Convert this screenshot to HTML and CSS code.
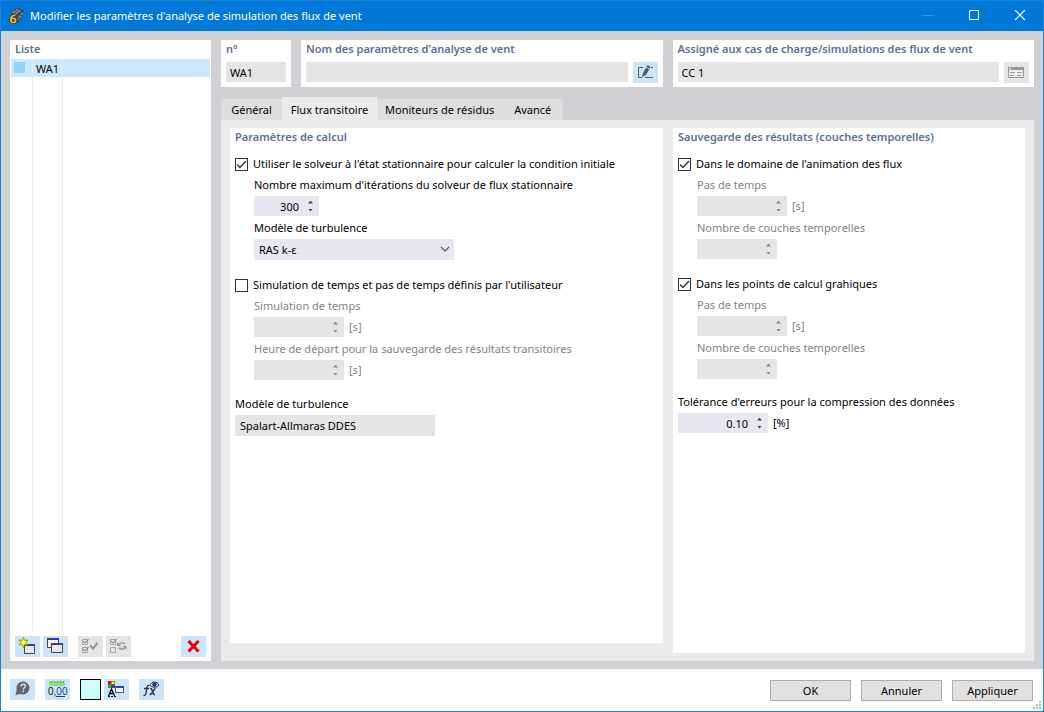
FILE: index.html
```html
<!DOCTYPE html>
<html lang="fr">
<head>
<meta charset="utf-8">
<title>Modifier les paramètres d'analyse de simulation des flux de vent</title>
<link rel="stylesheet" href="styles.css">
</head>
<body>
<div class="window">
  <header class="titlebar">
    <svg class="app-icon" viewBox="0 0 16 16" aria-hidden="true">
      <path d="M2 4 8 0l7 3v3l-6 9-3-1z" fill="#2e3b4a"/>
      <path d="M2.500 4 8 1l4 2-5 4z" fill="#9aa5b0"/>
      <path d="M13 4l2 1-5 8-2-3z" fill="#75818e"/>
      <path d="M4 3l4 3M6 2l4 3M4 6l6-4M11 7l3 1M9 10l3 1" stroke="#2b3642" stroke-width=".8"/>
      <path d="M6.500 7.500H4L2 9.500v4l1 1h2.500l1-1v-2l-1-1H2.500" fill="none" stroke="#3d3217" stroke-width="3"/>
      <path d="M6.500 7.500H4L2 9.500v4l1 1h2.500l1-1v-2l-1-1H2.500" fill="none" stroke="#f8c13a" stroke-width="1.600"/>
    </svg>
    <h1 class="title">Modifier les paramètres d'analyse de simulation des flux de vent</h1>
    <div class="window-controls">
      <button class="window-btn" type="button" aria-label="Réduire" disabled><svg viewBox="0 0 12 12"><path d="M1 5.500h10" stroke="#3a94e0"/></svg></button>
      <button class="window-btn" type="button" aria-label="Agrandir"><svg viewBox="0 0 12 12"><path d="M1.500 .5h9v9h-9z" fill="none" stroke="#fff"/></svg></button>
      <button class="window-btn" type="button" aria-label="Fermer"><svg viewBox="0 0 12 12"><path d="M1 0l10 10M11 0 1 10" stroke="#fff" stroke-width="1.200"/></svg></button>
    </div>
  </header>

  <main class="workspace">
    <section class="card list-card">
      <h2 class="heading">Liste</h2>
      <div class="list" role="listbox" aria-label="Liste">
        <div class="list-row" role="option" aria-selected="true">
          <span class="list-cell swatch-cell"><span class="swatch"></span></span>
          <span class="list-cell name-cell">WA1</span>
        </div>
      </div>
      <div class="toolbar">
        <button class="tool" type="button" aria-label="Nouveau">
          <svg viewBox="0 0 25 21"><path d="M9.500 8.500h10v9h-10z" fill="#e8e8e8" stroke="#444"/><path d="M9 8h11v2H9z" fill="#444"/><path d="M14 8h5v2h-5z" fill="#2638e0"/><path d="M8.500 1.500l1.200 3 3.300-.5-2 2.500 2 2.500-3.300-.5-1.200 3-1.200-3L4 9l2-2.500L4 4l3.300.5z" fill="#ffff2a" stroke="#77771a" stroke-width=".7"/></svg>
        </button>
        <button class="tool" type="button" aria-label="Copier">
          <svg viewBox="0 0 25 21"><path d="M4.500 2.500h11v9h-11z" fill="#f5f5f5" stroke="#444"/><path d="M4 2h12v2H4z" fill="#444"/><path d="M10 2h5v2h-5z" fill="#2638e0"/><path d="M8.500 7.500h11v9h-11z" fill="#e8e8e8" stroke="#444"/><path d="M8 7h12v2H8z" fill="#444"/><path d="M14 7h5v2h-5z" fill="#2638e0"/></svg>
        </button>
        <button class="tool tool-off tool-group" type="button" aria-label="Tout sélectionner" disabled>
          <svg viewBox="0 0 25 21" fill="none" stroke="#a5a5a5"><path d="M4.500 3.500h5v5h-5zM4.500 11.500h5v5h-5z"/><path d="M5 5l2 2 3.500-4M5 13l2 2 3.500-4" stroke="#777"/><path d="M12 9.500l3 3 4.500-5.500" stroke="#999" stroke-width="2.400"/></svg>
        </button>
        <button class="tool tool-off" type="button" aria-label="Inverser la sélection" disabled>
          <svg viewBox="0 0 25 21" fill="none" stroke="#a5a5a5"><path d="M4.500 3.500h5v5h-5zM4.500 11.500h5v5h-5z"/><path d="M5 5l2 2 3.500-4" stroke="#777"/><path d="M13 8.500c1.500-2 4-2 6-.5M19 11.500c-1.500 2-4 2-6 .5" stroke="#999" stroke-width="1.600"/><path d="M11 6v4h4zM20.500 14v-4h-4z" fill="#999" stroke="none"/></svg>
        </button>
        <button class="tool tool-end" type="button" aria-label="Supprimer">
          <svg viewBox="0 0 25 21"><path d="M7.500 5l10 10.500M17.500 5l-10 10.500" stroke="#f00000" stroke-width="3"/></svg>
        </button>
      </div>
    </section>

    <div class="details">
      <div class="summary">
        <section class="card summary-card number-card">
          <label class="heading" for="numero">n°</label>
          <input class="field" id="numero" value="WA1" readonly>
        </section>
        <section class="card summary-card">
          <label class="heading" for="nom">Nom des paramètres d'analyse de vent</label>
          <div class="field-line">
            <input class="field" id="nom" value="" readonly>
            <button class="tool" type="button" aria-label="Modifier le nom">
              <svg viewBox="0 0 25 21"><path d="M10 5.500H5.500v10H9M12 15.500h8M18 5.500h2" fill="none" stroke="#555"/><path d="M9 15l1-4 4.500-8 3 2-4.500 8z" fill="#555"/><path d="M13 5l3 2" stroke="#cce4f7"/></svg>
            </button>
          </div>
        </section>
        <section class="card summary-card">
          <label class="heading" for="assigne">Assigné aux cas de charge/simulations des flux de vent</label>
          <div class="field-line">
            <input class="field" id="assigne" value="CC 1" readonly>
            <button class="tool tool-off" type="button" aria-label="Sélectionner" disabled>
              <svg viewBox="0 0 25 21"><path d="M4.500 5.500h15v10h-15z" fill="#eee" stroke="#999"/><path d="M4 5h16v3H4z" fill="#999"/><path d="M5 6.500h2" stroke="#eee"/><path d="M6 10.500h5M13 10.500h5M6 13.500h4M13 13.500h4" stroke="#999"/></svg>
            </button>
          </div>
        </section>
      </div>

      <div class="tabs" role="tablist">
        <button class="tab" type="button" role="tab">Général</button>
        <button class="tab tab-active" type="button" role="tab" aria-selected="true">Flux transitoire</button>
        <button class="tab tab-wide" type="button" role="tab">Moniteurs de résidus</button>
        <button class="tab" type="button" role="tab">Avancé</button>
      </div>

      <div class="tab-panel" role="tabpanel">
        <section class="pane pane-calc">
          <h2 class="heading">Paramètres de calcul</h2>
          <div class="group">
            <label class="check"><input type="checkbox" checked>Utiliser le solveur à l'état stationnaire pour calculer la condition initiale</label>
            <div class="sub">
              <label class="label" for="iterations">Nombre maximum d'itérations du solveur de flux stationnaire</label>
              <div class="spin spin-small">
                <input class="spin-input" id="iterations" type="number" value="300">
                <div class="spin-arrows"><button class="arrow up" type="button" aria-label="Augmenter"></button><button class="arrow down" type="button" aria-label="Diminuer"></button></div>
              </div>
              <label class="label" for="turbulence">Modèle de turbulence</label>
              <div class="select-box">
                <select class="select" id="turbulence"><option>RAS k-ε</option></select>
                <svg class="chevron" viewBox="0 0 10 6" aria-hidden="true"><path d="M1 1l4 4 4-4" fill="none" stroke="#555" stroke-width="1.100"/></svg>
              </div>
            </div>
          </div>
          <div class="group">
            <label class="check"><input type="checkbox">Simulation de temps et pas de temps définis par l'utilisateur</label>
            <div class="sub sub-off">
              <label class="label" for="temps">Simulation de temps</label>
              <div class="field-line">
                <div class="spin">
                  <input class="spin-input" id="temps" type="number" disabled>
                  <div class="spin-arrows"><button class="arrow up" type="button" aria-label="Augmenter" disabled></button><button class="arrow down" type="button" aria-label="Diminuer" disabled></button></div>
                </div>
                <span class="unit">[s]</span>
              </div>
              <label class="label" for="depart">Heure de départ pour la sauvegarde des résultats transitoires</label>
              <div class="field-line">
                <div class="spin">
                  <input class="spin-input" id="depart" type="number" disabled>
                  <div class="spin-arrows"><button class="arrow up" type="button" aria-label="Augmenter" disabled></button><button class="arrow down" type="button" aria-label="Diminuer" disabled></button></div>
                </div>
                <span class="unit">[s]</span>
              </div>
            </div>
          </div>
          <div class="group group-last">
            <label class="label" for="modele">Modèle de turbulence</label>
            <input class="field model-field" id="modele" value="Spalart-Allmaras DDES" readonly>
          </div>
        </section>

        <section class="pane pane-save">
          <h2 class="heading">Sauvegarde des résultats (couches temporelles)</h2>
          <div class="group">
            <label class="check"><input type="checkbox" checked>Dans le domaine de l'animation des flux</label>
            <div class="sub sub-off">
              <label class="label" for="pas1">Pas de temps</label>
              <div class="field-line">
                <div class="spin">
                  <input class="spin-input" id="pas1" type="number" disabled>
                  <div class="spin-arrows"><button class="arrow up" type="button" aria-label="Augmenter" disabled></button><button class="arrow down" type="button" aria-label="Diminuer" disabled></button></div>
                </div>
                <span class="unit">[s]</span>
              </div>
              <label class="label" for="couches1">Nombre de couches temporelles</label>
              <div class="spin spin-medium">
                <input class="spin-input" id="couches1" type="number" disabled>
                <div class="spin-arrows"><button class="arrow up" type="button" aria-label="Augmenter" disabled></button><button class="arrow down" type="button" aria-label="Diminuer" disabled></button></div>
              </div>
            </div>
          </div>
          <div class="group">
            <label class="check"><input type="checkbox" checked>Dans les points de calcul grahiques</label>
            <div class="sub sub-off">
              <label class="label" for="pas2">Pas de temps</label>
              <div class="field-line">
                <div class="spin">
                  <input class="spin-input" id="pas2" type="number" disabled>
                  <div class="spin-arrows"><button class="arrow up" type="button" aria-label="Augmenter" disabled></button><button class="arrow down" type="button" aria-label="Diminuer" disabled></button></div>
                </div>
                <span class="unit">[s]</span>
              </div>
              <label class="label" for="couches2">Nombre de couches temporelles</label>
              <div class="spin spin-medium">
                <input class="spin-input" id="couches2" type="number" disabled>
                <div class="spin-arrows"><button class="arrow up" type="button" aria-label="Augmenter" disabled></button><button class="arrow down" type="button" aria-label="Diminuer" disabled></button></div>
              </div>
            </div>
          </div>
          <div class="group group-last">
            <label class="label" for="tolerance">Tolérance d'erreurs pour la compression des données</label>
            <div class="field-line">
              <div class="spin">
                <input class="spin-input" id="tolerance" type="number" step="0.01" value="0.10">
                <div class="spin-arrows"><button class="arrow up" type="button" aria-label="Augmenter"></button><button class="arrow down" type="button" aria-label="Diminuer"></button></div>
              </div>
              <span class="unit">[%]</span>
            </div>
          </div>
        </section>
      </div>
    </div>
  </main>

  <footer class="footer">
    <div class="footer-tools">
      <button class="tool" type="button" aria-label="Aide">
        <svg viewBox="0 0 25 21"><circle cx="13" cy="9" r="6.500" fill="#636363"/><path d="M7 9l-1.500 7 7-1.500z" fill="#636363"/><path d="M11 7.500c0-3 4.500-3 4.500-.5 0 1.500-2.200 1.500-2.200 3.500" fill="none" stroke="#cce4f7" stroke-width="1.500"/><path d="M12.500 11.500h1.600v1.600h-1.600z" fill="#cce4f7"/></svg>
      </button>
      <button class="tool" type="button" aria-label="Unités et décimales">
        <svg viewBox="0 0 25 21"><path d="M4 2h16v5H4z" fill="#92dc88"/><path d="M6.500 2v2M9.500 2v2M12.500 2v2M15.500 2v2M18.500 2v2" stroke="#69a962"/><text x="3" y="16" class="icon-digits">0,<tspan fill="#1c3f94">00</tspan></text><path d="M11 17.500h9" stroke="#1c3f94"/></svg>
      </button>
      <button class="color-box" type="button" aria-label="Couleur"></button>
      <button class="tool tool-near" type="button" aria-label="Affichage">
        <svg viewBox="0 0 25 21"><path d="M4 2h7v7H4z" fill="#555"/><path d="M4.500 2.500h3v3h-3z" fill="#f00"/><path d="M7.500 2.500h3v3h-3z" fill="#ffe600"/><path d="M4.500 5.500h3v3h-3z" fill="#00d000"/><path d="M7.500 5.500h3v3h-3z" fill="#3030ff"/><path d="M4.500 17l3-7 3 7M6 14.500h3.500" fill="none" stroke="#111" stroke-width="1.300"/><path d="M4 17.500h9" stroke="#111" stroke-dasharray="2 1"/><path d="M11.500 7.500h8v6h-8z" fill="#f3f3f3" stroke="#555"/><path d="M11 7h9v2h-9z" fill="#555"/><path d="M14 7h5v2h-5z" fill="#2638e0"/></svg>
      </button>
      <button class="tool" type="button" aria-label="Formule">
        <svg viewBox="0 0 25 21" fill="none" stroke="#333"><path d="M10.500 6.500c-2.500-1-2.500 2-3 4.500S7 17 4.500 16.500M5 9.500h5" stroke-width="1.300"/><path d="M11 9.500c3-1 2 7 5 6M16.500 9.500c-2 0-3 7-6 6" stroke-width="1.500"/><path d="M11 6c2-4 7-4 9 0-2 3-7 3-9 0z" fill="#e4ebf5" stroke="#26336b"/><circle cx="15.500" cy="5.500" r="2.200" fill="#26336b" stroke="none"/></svg>
      </button>
    </div>
    <div class="footer-actions">
      <button class="action" type="button">OK</button>
      <button class="action" type="button">Annuler</button>
      <button class="action" type="button">Appliquer</button>
    </div>
    <svg class="grip" viewBox="0 0 8 8" aria-hidden="true"><path d="M6 0h2v2H6zM3 3h2v2H3zM6 3h2v2H6zM0 6h2v2H0zM3 6h2v2H3zM6 6h2v2H6z" fill="#bfbfbf"/></svg>
  </footer>
</div>
</body>
</html>
```
FILE: styles.css
```css
* {
  box-sizing: border-box;
}

body {
  margin: 0;
  color: #000;
  font: 11px/16px "Noto Sans", "Open Sans", sans-serif;
}

button,
input,
select {
  margin: 0;
  border: 0;
  border-radius: 0;
  padding: 0;
  color: inherit;
  font: inherit;
}

.window {
  display: flex;
  flex-direction: column;
  min-height: 100vh;
  border: 1px solid #1883d7;
  background: #fff;
}

/* Title bar */

.titlebar {
  display: flex;
  align-items: center;
  height: 30px;
  padding-left: 8px;
  background: #0078d7;
  color: #fff;
}

.app-icon {
  width: 16px;
  height: 16px;
  margin-right: 5px;
}

.title {
  flex: 1;
  margin: 0;
  font-size: 11px;
  font-weight: 400;
}

.window-controls {
  display: flex;
  height: 100%;
}

.window-btn {
  display: flex;
  align-items: center;
  justify-content: center;
  width: 46px;
  background: none;
}

.window-btn svg {
  width: 12px;
  height: 12px;
}

/* Work area */

.workspace {
  display: flex;
  flex: 1;
  gap: 10px;
  padding: 9px 9px 8px;
  background: #d1d0d5;
}

.card {
  background: #fff;
}

.heading {
  display: block;
  margin: 0;
  padding-left: 5px;
  color: #5a6e96;
  font-size: 11px;
  font-weight: 600;
  line-height: 18px;
}

.list-card {
  display: flex;
  flex-direction: column;
  width: 201px;
}

.list {
  flex: 1;
  margin: 1px 1px 0;
  background:
    linear-gradient(#ebebeb, #ebebeb) 21px 0 / 1px 100% no-repeat,
    linear-gradient(#ebebeb, #ebebeb) 51px 0 / 1px 100% no-repeat;
}

.list-row {
  display: flex;
  height: 18px;
  background: #cce8ff;
}

.list-cell {
  border-right: 1px solid #ebebeb;
  line-height: 20px;
}

.swatch-cell {
  width: 22px;
  padding: 3px;
}

.swatch {
  display: block;
  width: 11px;
  height: 11px;
  background: #8fd6f5;
}

.name-cell {
  width: 30px;
  padding-left: 3px;
}

.toolbar {
  display: flex;
  gap: 3px;
  padding: 5px 5px 4px;
}

.tool {
  flex: none;
  width: 25px;
  height: 21px;
  background: #cce4f7;
}

.tool svg {
  display: block;
  width: 25px;
  height: 21px;
}

.tool-off {
  background: #e5e5e5;
}

.tool-group {
  margin-left: 7px;
}

.tool-end {
  margin-left: auto;
}

.details {
  display: flex;
  flex: 1;
  flex-direction: column;
}

.summary {
  display: flex;
  gap: 10px;
}

.summary-card {
  flex: 1;
  padding-bottom: 4px;
}

.number-card {
  flex: none;
  width: 70px;
}

.summary-card .field-line,
.number-card .field {
  margin: 4px 5px 0;
}

.number-card .field {
  width: 60px;
}

.summary-card .field-line {
  gap: 5px;
}

.field-line {
  display: flex;
}

.field {
  display: block;
  width: 100%;
  height: 20px;
  padding: 0 4px;
  background: #e5e5e5;
}

/* Tabs */

.tabs {
  display: flex;
  align-items: flex-end;
  margin-top: 10px;
}

.tab {
  min-width: 61px;
  height: 21px;
  padding: 1px 8px 0;
  background: #dedede;
  white-space: nowrap;
}

.tab-active {
  height: 23px;
  min-width: 95px;
  padding-top: 2px;
  background: #ebebeb;
}

.tab-wide {
  min-width: 124px;
}

.tab-panel {
  display: flex;
  flex: 1;
  gap: 10px;
  padding: 8px 9px;
  background: #ebebeb;
}

.pane {
  background: #fff;
}

.pane-calc {
  flex: 433;
  margin-bottom: 10px;
}

.pane-save {
  flex: 352;
}

.pane > .heading {
  margin-bottom: 8px;
}

.group {
  padding: 0 5px;
}

.group + .group {
  margin-top: 15px;
}

.group + .group-last {
  margin-top: 12px;
}

.sub {
  padding-left: 19px;
}

.sub-off {
  color: #838383;
}

.check {
  display: flex;
  align-items: center;
  gap: 5px;
  height: 20px;
}

.check input {
  flex: none;
  appearance: none;
  width: 13px;
  height: 13px;
  border: 1px solid #333;
  background: #fff;
}

.check input:checked {
  background: url("data:image/svg+xml,%3Csvg xmlns='http://www.w3.org/2000/svg' viewBox='0 0 11 11'%3E%3Cpath d='M1 5.500l3 3 6-6.500' fill='none' stroke='%23333' stroke-width='1.300'/%3E%3C/svg%3E");
}

.label {
  display: block;
  line-height: 22px;
}

.spin {
  display: flex;
  width: 90px;
  height: 20px;
  margin-bottom: 1px;
  background: #e7e7f2;
}

.spin-small {
  width: 65px;
}

.spin-medium {
  width: 80px;
}

.spin-input {
  flex: 1;
  min-width: 0;
  appearance: textfield;
  padding-top: 1px;
  background: transparent;
  text-align: right;
}

.spin-input::-webkit-inner-spin-button {
  appearance: none;
}

.spin-arrows {
  display: flex;
  flex-direction: column;
  justify-content: center;
  gap: 5px;
  width: 20px;
  padding-left: 9px;
}

.arrow {
  width: 5px;
  height: 3px;
  background: #444;
}

.up {
  clip-path: polygon(50% 0, 100% 100%, 0 100%);
}

.down {
  clip-path: polygon(0 0, 100% 0, 50% 100%);
}

.sub-off .spin {
  background: #e5e5e5;
}

.sub-off .arrow {
  background: #8c8c8c;
}

.unit {
  padding-left: 5px;
  line-height: 20px;
}

.select-box {
  position: relative;
  width: 200px;
}

.select {
  display: block;
  appearance: none;
  width: 100%;
  height: 21px;
  padding: 1px 5px 0;
  background: #e7e7f2;
}

.chevron {
  position: absolute;
  top: 7px;
  right: 4px;
  width: 10px;
  height: 6px;
  pointer-events: none;
}

.model-field {
  width: 200px;
  height: 21px;
  padding: 0 5px;
}

/* Footer */

.footer {
  position: relative;
  display: flex;
  justify-content: space-between;
  padding: 10px 10px 10px 9px;
}

.footer-tools,
.footer-actions {
  display: flex;
  gap: 10px;
}

.footer-actions {
  padding-top: 1px;
}

.color-box {
  width: 21px;
  height: 21px;
  border: 1px solid #000;
  background: #ccffff;
}

.tool-near {
  margin-left: -7px;
}

.icon-digits {
  fill: #111;
  font: 10px "Liberation Sans", sans-serif;
}

.action {
  width: 81px;
  height: 21px;
  border: 1px solid #adadad;
  background: #e1e1e1;
}

.grip {
  position: absolute;
  right: 2px;
  bottom: 2px;
  width: 8px;
  height: 8px;
}
```
